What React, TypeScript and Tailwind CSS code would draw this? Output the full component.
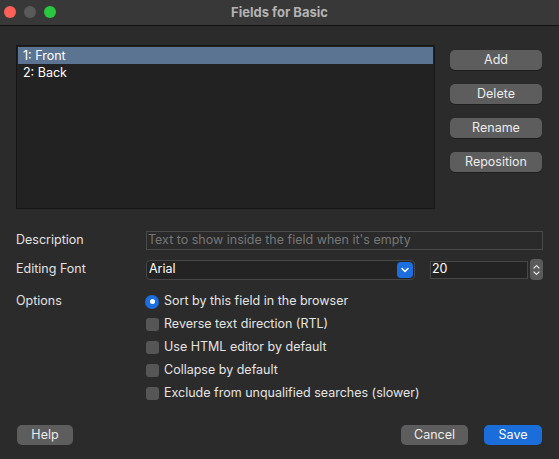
const font = { fontFamily: "Inter, 'Liberation Sans', sans-serif" }

function SideButton({ label }: { label: string }) {
  return (
    <button className="h-[20px] w-[92px] rounded-[5px] bg-[#5d5d5d] text-[12.5px] text-[#ececec] shadow-[0_1px_0_rgba(0,0,0,0.3)]">
      {label}
    </button>
  )
}

function Check({ label }: { label: string }) {
  return (
    <div className="flex h-[23px] items-center">
      <span className="mr-[5px] h-[13px] w-[13px] rounded-[3px] bg-[#565656]" />
      <span className="text-[12.5px] text-[#e4e4e4]">{label}</span>
    </div>
  )
}

export default function App() {
  return (
    <div className="h-[459px] w-[559px] bg-[#2b2b2b] text-[#e2e2e2]" style={font}>
      <div className="relative flex h-[26px] items-center justify-center border-b border-[#121212] bg-[#383838]">
        <div className="absolute left-[4px] top-[6px] flex gap-[8px]">
          <span className="h-[12px] w-[12px] rounded-full bg-[#fe5f57]" />
          <span className="h-[12px] w-[12px] rounded-full bg-[#5a5a5a]" />
          <span className="h-[12px] w-[12px] rounded-full bg-[#28c840]" />
        </div>
        <span className="text-[13px] font-bold text-[#b3b3b3]">Fields for Basic</span>
      </div>

      <div className="flex px-[16px] pt-[19px]">
        <div className="h-[164px] w-[419px] border border-[#161616] bg-[#222222] px-px pt-px">
          <div className="h-[17px] bg-[#5a7491] pl-[5px] text-[12.5px] leading-[17px] text-white">1: Front</div>
          <div className="h-[17px] pl-[5px] text-[12.5px] leading-[17px] text-white">2: Back</div>
        </div>
        <div className="ml-[15px] flex flex-col gap-[14px] pt-[5px]">
          <SideButton label="Add" />
          <SideButton label="Delete" />
          <SideButton label="Rename" />
          <SideButton label="Reposition" />
        </div>
      </div>

      <div className="mt-[22px] grid grid-cols-[130px_1fr] gap-y-[9px] px-[16px]">
        <div className="flex h-[19px] items-center text-[12.5px]">Description</div>
        <div className="flex h-[19px] items-center border border-[#4a4a4a] bg-[#2a2a2a] pl-[1px] text-[12.5px] text-[#777777]">
          Text to show inside the field when it's empty
        </div>

        <div className="flex h-[20px] items-center text-[12.5px]">Editing Font</div>
        <div className="flex items-center">
          <div className="flex h-[20px] w-[269px] items-center justify-between rounded-[4px] border border-[#474747] bg-[#232323] pl-[2px] pr-[1px] text-[12.5px] text-white">
            <span>Arial</span>
            <span className="flex h-[16px] w-[16px] items-center justify-center rounded-[4px] bg-[#1d6fe0]">
              <svg width="8" height="6" viewBox="0 0 8 6" fill="none">
                <path d="M1 1.5l3 3 3-3" stroke="white" strokeWidth="1.5" strokeLinecap="round" strokeLinejoin="round" />
              </svg>
            </span>
          </div>
          <div className="ml-[15px] flex h-[18px] w-[98px] items-center border border-[#474747] bg-[#232323] pl-[1px] text-[12.5px] text-white">
            20
          </div>
          <div className="ml-[2px] flex h-[21px] w-[13px] flex-col items-center justify-center gap-[2px] rounded-[4px] bg-[#5a5a5a]">
            <svg width="7" height="5" viewBox="0 0 7 5" fill="none">
              <path d="M1 4l2.5-2.5L6 4" stroke="#e0e0e0" strokeWidth="1.2" strokeLinecap="round" />
            </svg>
            <svg width="7" height="5" viewBox="0 0 7 5" fill="none">
              <path d="M1 1l2.5 2.5L6 1" stroke="#e0e0e0" strokeWidth="1.2" strokeLinecap="round" />
            </svg>
          </div>
        </div>

        <div className="pt-[3px] text-[12.5px]">Options</div>
        <div className="flex flex-col pt-px">
          <div className="flex h-[23px] items-center">
            <span className="ml-[-1px] mr-[5px] flex h-[14px] w-[14px] items-center justify-center rounded-full bg-[#1d6fe0]">
              <span className="h-[5px] w-[5px] rounded-full bg-white" />
            </span>
            <span className="text-[12.5px] text-[#e4e4e4]">Sort by this field in the browser</span>
          </div>
          <Check label="Reverse text direction (RTL)" />
          <Check label="Use HTML editor by default" />
          <Check label="Collapse by default" />
          <Check label="Exclude from unqualified searches (slower)" />
        </div>
      </div>

      <div className="mt-[20px] flex items-center px-[17px]">
        <button className="h-[20px] w-[56px] rounded-[5px] bg-[#5d5d5d] text-[12.5px] text-[#ececec]">Help</button>
        <div className="flex-1" />
        <button className="h-[20px] w-[67px] rounded-[5px] bg-[#5d5d5d] text-[12.5px] text-[#ececec]">Cancel</button>
        <button className="ml-[16px] h-[20px] w-[58px] rounded-[5px] bg-[#1b6ed9] text-[12.5px] text-white">Save</button>
      </div>
    </div>
  )
}
